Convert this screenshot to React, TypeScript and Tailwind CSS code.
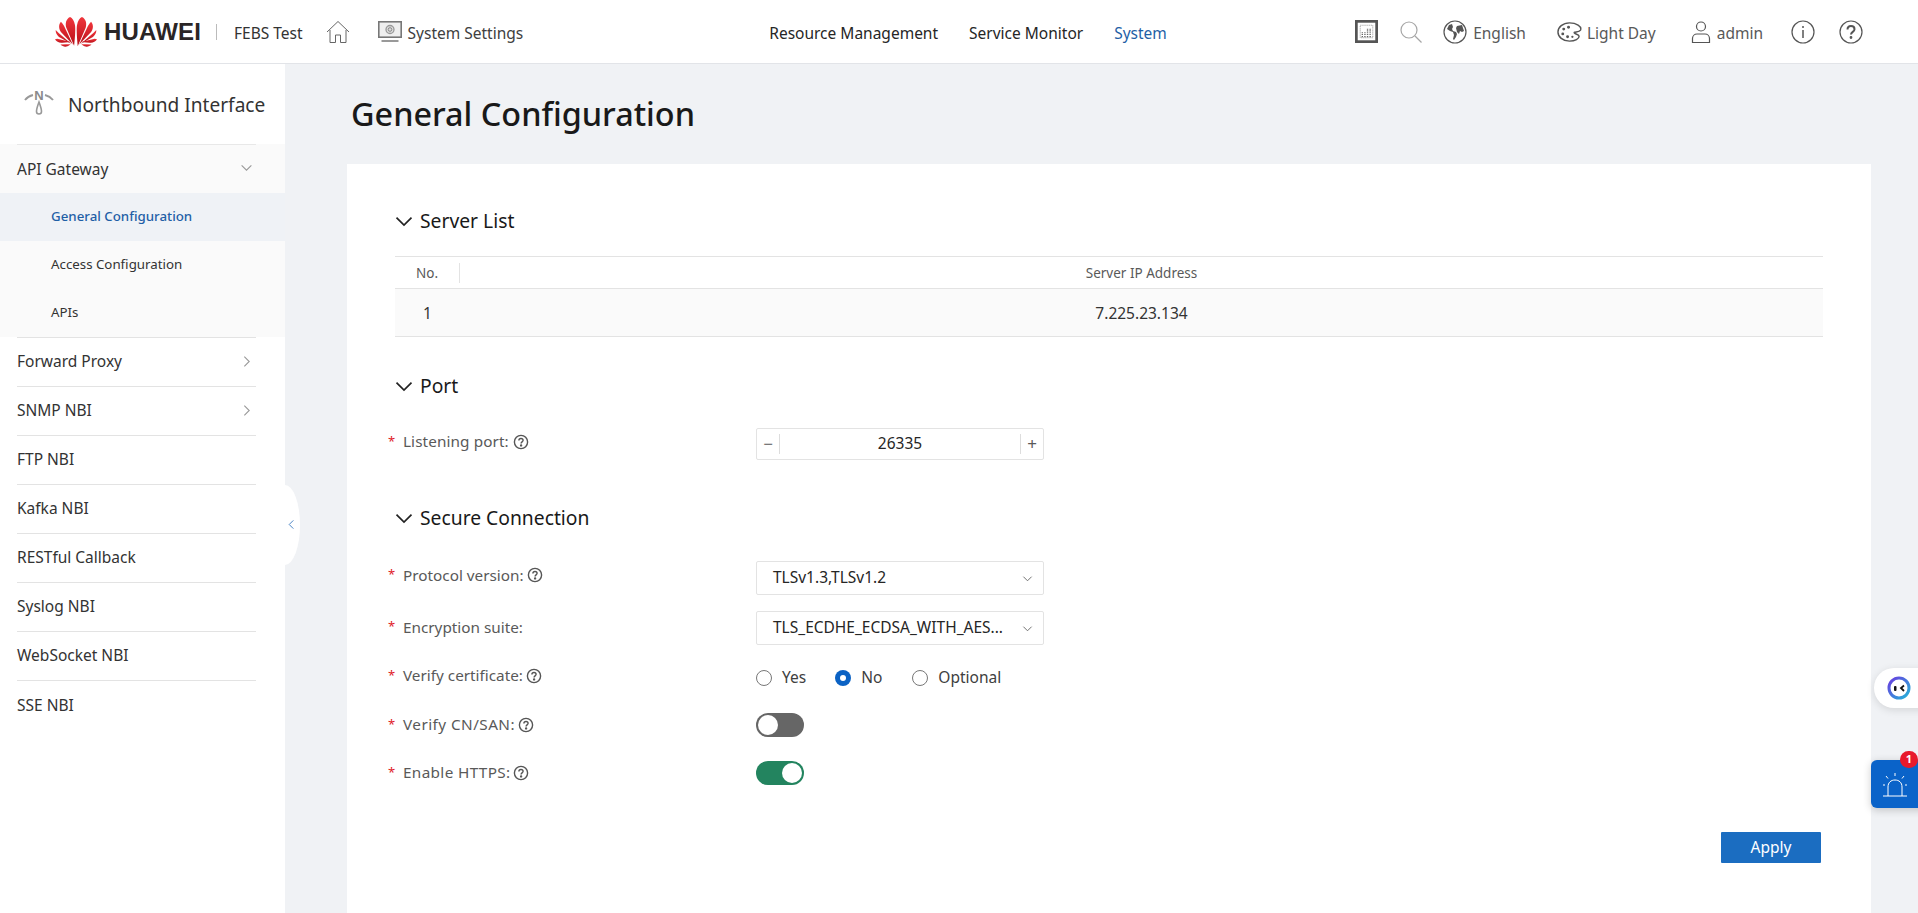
import React from "react";

const Chevron = ({ dir = "down", cls = "" }: { dir?: "down" | "right" | "left"; cls?: string }) => (
  <svg viewBox="0 0 12 12" className={cls} fill="none" stroke="currentColor" strokeWidth="1">
    {dir === "down" && <path d="M1.5 4l4.5 4.5L10.5 4" />}
    {dir === "right" && <path d="M4 1.5L8.5 6 4 10.5" />}
    {dir === "left" && <path d="M8 1.5L3.5 6 8 10.5" />}
  </svg>
);

const Help = ({ cls = "w-[16px] h-[16px]" }: { cls?: string }) => (
  <svg viewBox="0 0 16 16" className={`${cls} shrink-0`} fill="none" stroke="#555" strokeWidth="1.4">
    <circle cx="8" cy="8" r="6.6" />
    <path d="M5.9 6.4c0-1.2 1-1.9 2.1-1.9s2.1.7 2.1 1.8c0 1.5-2 1.6-2 3.1" />
    <circle cx="8.1" cy="11.4" r=".5" fill="#555" stroke="#555" />
  </svg>
);

const Logo = () => (
  <svg viewBox="0 0 46 33" className="w-[42px] h-[32px] shrink-0" preserveAspectRatio="none">
    <defs>
      <linearGradient id="pet" x1="0" y1="0" x2="0" y2="1">
        <stop offset="0" stopColor="#f0363c" />
        <stop offset="1" stopColor="#b80f18" />
      </linearGradient>
    </defs>
    <path d="M16.5 1C12 3 11 8 12.4 12l8.6 19C21 31 23 14 21.8 9 21 5 19 2 16.5 1z" fill="url(#pet)" />
    <path d="M29.5 1C34 3 35 8 33.6 12L25 31C25 31 23 14 24.2 9 25 5 27 2 29.5 1z" fill="url(#pet)" />
    <path d="M6.5 6C3.5 9 4 14 7 17l12.5 12.5L9.8 10C8.8 8.5 7.5 7 6.5 6z" fill="url(#pet)" />
    <path d="M39.5 6C42.5 9 42 14 39 17L26.5 29.5 36.2 10C37.2 8.5 38.5 7 39.5 6z" fill="url(#pet)" />
    <path d="M.8 14.5C.5 18 3 21 6 22.5l12 6.5L4 17.5C3 16.5 1.8 15.5.8 14.5z" fill="url(#pet)" />
    <path d="M45.2 14.5C45.5 18 43 21 40 22.5l-12 6.5 14-11.5c1-1 2.2-2 3.2-3z" fill="url(#pet)" />
    <path d="M0 24c1.5 2.5 5 4 8 3.5l9.5-.8L2.5 23.500C1.5 23.5.8 23.7 0 24z" fill="url(#pet)" />
    <path d="M46 24c-1.5 2.5-5 4-8 3.5l-9.5-.8 15-3.2c1 0 1.7.2 2.5.5z" fill="url(#pet)" />
    <path d="M6 29.5c3 2.5 6.5 3 10 .5.5-.4 1.500-1 1.500-1z" fill="url(#pet)" />
    <path d="M40 29.5c-3 2.5-6.5 3-10 .5-.5-.4-1.500-1-1.500-1z" fill="url(#pet)" />
  </svg>
);

const Row = ({ label, children, help = true, h = "h-[47px]", yl = "", lc = "" }: { label: string; children: React.ReactNode; help?: boolean; h?: string; yl?: string; lc?: string }) => (
  <div className={`flex items-center ${h}`}>
    <div className={`w-[369px] flex items-center text-[15.3px] text-[#595959] ${yl}`}>
      <span className="text-[#e02128] w-[16px] pl-[1px] text-[13px]">*</span>
      <span className={lc}>{label}</span>
      {help && <span className="ml-[3px]"><Help /></span>}
    </div>
    {children}
  </div>
);

const SectionHead = ({ title, cls = "" }: { title: string; cls?: string }) => (
  <div className={`flex items-center h-[32px] ${cls}`}>
    <Chevron cls="w-[20px] h-[20px] text-[#222] -ml-[1px]" />
    <span className="ml-[6px] text-[19.3px] text-[#191919]">{title}</span>
  </div>
);

const Select = ({ value }: { value: string }) => (
  <div className="w-[288px] h-[34px] border border-[#e3e3e3] rounded-[2px] flex items-center pl-[16px] pr-[10px] justify-between text-[15.5px] text-[#262626]">
    <span>{value}</span>
    <Chevron cls="w-[11px] h-[11px] text-[#666]" />
  </div>
);

const Radio = ({ label, on = false, cls = "" }: { label: string; on?: boolean; cls?: string }) => (
  <div className={`flex items-center text-[15.5px] text-[#404040] ${cls}`}>
    {on ? (
      <span className="w-[16px] h-[16px] rounded-full bg-[#0b62c4] flex items-center justify-center">
        <span className="w-[6px] h-[6px] rounded-full bg-white" />
      </span>
    ) : (
      <span className="w-[16px] h-[16px] rounded-full border border-[#777] bg-white" />
    )}
    <span className="ml-[10px]">{label}</span>
  </div>
);

const Toggle = ({ on }: { on: boolean }) => (
  <div className={`w-[48px] h-[24px] rounded-full flex items-center px-[2px] ${on ? "bg-[#23845f] justify-end" : "bg-[#666666] justify-start"}`}>
    <span className="w-[20px] h-[20px] rounded-full bg-white" />
  </div>
);

const NavItem = ({ label, arrow, last }: { label: string; arrow?: boolean; last?: boolean }) => (
  <div className={`ml-[17px] mr-[29px] h-[49px] flex items-center justify-between text-[15.5px] text-[#333] ${last ? "" : "border-b border-[#e3e3e3]"}`}>
    <span>{label}</span>
    {arrow && <Chevron dir="right" cls="w-[13px] h-[13px] text-[#999] mr-[3px] -mt-[2px]" />}
  </div>
);

export default function App() {
  return (
    <div className="relative w-[1918px] h-[913px] overflow-hidden bg-white flex flex-col" style={{ fontFamily: '"Noto Sans", sans-serif' }}>
      {/* Header */}
      <header className="h-[64px] shrink-0 bg-white border-b border-[#e2e4e8] flex items-center text-[15.5px] text-[#404040]">
        <div className="ml-[55px]"><Logo /></div>
        <span className="ml-[7px] text-[24px] font-bold text-[#2a2526] tracking-[0.2px] w-[97px] mt-[1px]" style={{ fontFamily: '"Liberation Sans", sans-serif' }}>HUAWEI</span>
        <span className="ml-[15px] w-px h-[16px] bg-[#bbb]" />
        <span className="ml-[17px] text-[#333] mt-[4px]">FEBS Test</span>
        <svg viewBox="0 0 24 24" className="ml-[23px] w-[24px] h-[24px] text-[#666]" fill="none" stroke="currentColor" strokeWidth="1">
          <path d="M1 12L12 1.5 23 12M4 10v12.500h5.500V15h5v7.500H20V10" />
        </svg>
        <svg viewBox="0 0 24 22" className="ml-[28px] w-[24px] h-[22px] text-[#777]" fill="none" stroke="currentColor">
          <rect x=".8" y=".8" width="22.4" height="15.400" fill="#efefef" strokeWidth="1.6" />
          <circle cx="12" cy="8.500" r="4" strokeWidth="1.300" stroke="#999" fill="#ddd" />
          <circle cx="12" cy="8.500" r="1.800" strokeWidth="1" stroke="#888" />
          <path d="M3.500 20h17" strokeWidth="2" stroke="#999" />
        </svg>
        <span className="ml-[6px] mt-[4px]">System Settings</span>

        <span className="ml-[246px] text-[#262626] mt-[4px]">Resource Management</span>
        <span className="ml-[31px] text-[#262626] mt-[4px]">Service Monitor</span>
        <span className="ml-[31px] text-[#1f5fa6] mt-[4px]">System</span>

        <div className="ml-[auto] mr-[55px] flex items-center text-[#595959]">
          <svg viewBox="0 0 22 22" className="w-[23px] h-[23px]" fill="none">
            <rect x="1.300" y="1.300" width="19.400" height="19.400" stroke="#555" strokeWidth="2.600" />
            <rect x="5" y="5" width="12" height="12" stroke="#aaa" strokeDasharray="1.200 .8" />
            <path d="M7 16.500v-5M9.500 16.500v-5M12 16.500V8M14.500 16.500V8" stroke="#666" strokeWidth="1.300" strokeDasharray="1.300 .8" />
          </svg>
          <svg viewBox="0 0 22 22" className="ml-[22px] w-[22px] h-[22px]" fill="none" stroke="#a6a6a6" strokeWidth="1.200">
            <circle cx="9" cy="9" r="8" />
            <path d="M15 15l6.500 6.500" />
          </svg>
          <svg viewBox="0 0 24 24" className="ml-[21px] w-[24px] h-[24px]" fill="none">
            <circle cx="12" cy="12" r="11" stroke="#555" strokeWidth="1.200" />
            <path d="M9 4L6 5 4 9l3 2 3 1 1 3-1 4 1 1 2-3 1-3-1-2-3-1-1-2 1-2zM14 6l5-1 2 6-2 1-2-1-1 3-2-2-1-4z" fill="#555" />
          </svg>
          <span className="ml-[6px] mt-[4px]">English</span>
          <svg viewBox="0 0 26 22" className="ml-[31px] w-[25px] h-[22px]" fill="none">
            <path d="M13 1.500C6 1.500 1 6 1 11s5 9.500 12 9.500c6 0 10-2.500 10-5 0-2-3.500-2-5-3.500-1-1.500 5-.5 6.500-3C26 5 20 1.500 13 1.500z" stroke="#555" strokeWidth="1.500" />
            <circle cx="7" cy="8" r="1.500" fill="#555" /><circle cx="12" cy="6" r="1.500" fill="#555" />
            <circle cx="6" cy="13" r="1.500" fill="#555" /><circle cx="11" cy="16" r="1.500" fill="#555" /><circle cx="16" cy="16" r="1.200" fill="#555" />
          </svg>
          <span className="ml-[5px] mt-[4px]">Light Day</span>
          <svg viewBox="0 0 20 24" className="ml-[35px] w-[20px] h-[24px]" fill="none" stroke="#555" strokeWidth="1.200">
            <circle cx="10" cy="6.500" r="4.500" />
            <path d="M1.500 22.500v-4c0-2.500 2-4.500 4.500-4.500h8c2.500 0 4.500 2 4.500 4.500v4z" />
          </svg>
          <span className="ml-[6px] mt-[4px]">admin</span>
          <svg viewBox="0 0 24 24" className="ml-[28px] w-[24px] h-[24px]" fill="none" stroke="#555" strokeWidth="1.200">
            <circle cx="12" cy="12" r="11" />
            <path d="M12 10v8M12 6v2" strokeWidth="1.500" />
          </svg>
          <svg viewBox="0 0 24 24" className="ml-[24px] w-[24px] h-[24px]" fill="none" stroke="#555" strokeWidth="1.200">
            <circle cx="12" cy="12" r="11" />
            <path d="M8.500 9.500C8.500 7.300 10 6 12 6s3.500 1.300 3.500 3.200c0 2.600-3.500 2.800-3.500 5.300" strokeWidth="2" />
            <circle cx="12" cy="17.500" r=".8" fill="#555" />
          </svg>
        </div>
      </header>

      <div className="flex flex-1 min-h-0">
        {/* Sidebar */}
        <aside className="relative w-[285px] shrink-0 bg-white">
          <div className="h-[80px] flex items-center pl-[24px]">
            <svg viewBox="0 0 30 30" className="w-[30px] h-[30px] -mt-[4px] shrink-0" fill="none" stroke="#999" strokeWidth="2">
              <path d="M1 13c2-2.500 4-4 8-5M29 13c-2-2.500-4-4-8-5" />
              <text x="15" y="13" textAnchor="middle" fontSize="13" fontWeight="700" fill="#8a8a8a" stroke="none" fontFamily="Liberation Sans, sans-serif">N</text>
              <path d="M15 15c-1.500 4-2.500 7-2.500 9.500 0 1.500 1 2.500 2.500 2.500s2.500-1 2.500-2.500c0-2.500-1-5.500-2.500-9.500z" strokeWidth="1.600" />
            </svg>
            <span className="ml-[14px] mt-[2px] text-[19.1px] text-[#333]">Northbound Interface</span>
          </div>
          <div className="bg-[#fafafa]">
            <div className="ml-[17px] mr-[29px] border-t border-[#e8e8e8] h-[49px] flex items-center justify-between text-[15.5px] text-[#333]">
              <span className="mt-[1px]">API Gateway</span>
              <Chevron cls="w-[13px] h-[13px] text-[#999] mr-[3px] -mt-[4px]" />
            </div>
            <div className="h-[48px] bg-[#eff2f6] pl-[51px] pb-[1px] flex items-center text-[13.3px] font-medium text-[#1f5fa6]">General Configuration</div>
            <div className="h-[48px] pl-[51px] pb-[1px] flex items-center text-[13.3px] text-[#333]">Access Configuration</div>
            <div className="h-[48px] pl-[51px] pb-[1px] flex items-center text-[13.3px] text-[#333]">APIs</div>
          </div>
          <div className="border-t border-[#e3e3e3] ml-[17px] mr-[29px]" />
          <NavItem label="Forward Proxy" arrow />
          <NavItem label="SNMP NBI" arrow />
          <NavItem label="FTP NBI" />
          <NavItem label="Kafka NBI" />
          <NavItem label="RESTful Callback" />
          <NavItem label="Syslog NBI" />
          <NavItem label="WebSocket NBI" />
          <NavItem label="SSE NBI" last />
          {/* collapse handle */}
          <div className="absolute left-[285px] top-[421px] w-[15px] h-[80px] bg-white rounded-r-[15px_40px] flex items-center justify-start pl-[1px] z-10">
            <Chevron dir="left" cls="w-[11px] h-[11px] text-[#3b7bbf] -mt-[2px]" />
          </div>
        </aside>

        {/* Main */}
        <main className="flex-1 min-w-0 bg-[#f0f2f5] pl-[62px] pr-[47px] flex flex-col">
          <h1 className="h-[100px] pt-[26px] pl-[4px] text-[32.4px] leading-[46px] font-medium text-[#191919]">General Configuration</h1>
          <section className="flex-1 bg-white pl-[48px] pr-[48px] pt-[41px]">
            <SectionHead title="Server List" />
            <div className="mt-[19px] border-t border-[#e3e3e3]">
              <div className="h-[32px] pt-[1px] flex items-center text-[13.5px] text-[#595959] border-b border-[#e3e3e3]">
                <span className="w-[65px] text-center border-r border-[#e3e3e3] leading-[20px]">No.</span>
                <span className="flex-1 text-center">Server IP Address</span>
              </div>
              <div className="h-[48px] pt-[2px] bg-[#fafafa] flex items-center text-[15.5px] text-[#333] border-b border-[#e3e3e3]">
                <span className="w-[65px] text-center">1</span>
                <span className="flex-1 text-center">7.225.23.134</span>
              </div>
            </div>

            <SectionHead title="Port" cls="mt-[33px]" />
            <div className="mt-[26px]">
              <div className="-ml-[8px] flex items-center h-[32px]">
                <div className="w-[369px] flex items-center text-[15.3px] text-[#595959] -mt-[5px]">
                  <span className="text-[#e02128] w-[16px] pl-[1px] text-[13px]">*</span>
                  <span className="tracking-[0.1px]">Listening port:</span>
                  <span className="ml-[4px]"><Help /></span>
                </div>
                <div className="w-[288px] h-[32px] border border-[#e3e3e3] rounded-[2px] flex items-center text-[#595959]">
                  <span className="w-[23px] h-[20px] border-r border-[#ddd] flex items-center justify-center text-[17px] leading-[20px]">−</span>
                  <span className="flex-1 text-center text-[15.5px] text-[#262626]">26335</span>
                  <span className="w-[23px] h-[20px] border-l border-[#ddd] flex items-center justify-center text-[17px] leading-[20px]">+</span>
                </div>
              </div>
            </div>

            <SectionHead title="Secure Connection" cls="mt-[42px]" />
            <div className="-ml-[8px] mt-[27px]">
              <Row label="Protocol version:" h="h-[34px]" yl="-mt-[6px]"><Select value="TLSv1.3,TLSv1.2" /></Row>
              <div className="mt-[16px]">
                <Row label="Encryption suite:" help={false} h="h-[34px]" yl="-mt-[2px]"><Select value="TLS_ECDHE_ECDSA_WITH_AES..." /></Row>
              </div>
              <div className="mt-[10px]">
                <Row label="Verify certificate:" h="h-[46px]" yl="-mt-[5px]">
                  <div className="flex items-center">
                    <Radio label="Yes" />
                    <Radio label="No" on cls="ml-[29px]" />
                    <Radio label="Optional" cls="ml-[30px]" />
                  </div>
                </Row>
              </div>
              <Row label="Verify CN/SAN:" h="h-[47px]" lc="tracking-[0.45px]"><Toggle on={false} /></Row>
              <Row label="Enable HTTPS:" h="h-[49px]" lc="tracking-[0.35px]"><Toggle on /></Row>
            </div>
            <div className="flex justify-end mt-[35px] pr-[2px]">
              <div className="w-[100px] h-[31px] bg-[#1b6dc1] text-white text-[15.5px] flex items-center justify-center rounded-[1px]">Apply</div>
            </div>
          </section>
        </main>
      </div>

      {/* Floating widgets */}
      <div className="absolute left-[1874px] top-[668px] w-[60px] h-[40px] rounded-l-full bg-white shadow-[0_2px_8px_rgba(0,0,0,0.12)] flex items-center pl-[13px]">
        <svg viewBox="0 0 24 24" className="w-[24px] h-[24px]" fill="none">
          <defs>
            <linearGradient id="bot" x1="0" y1="0" x2="1" y2="1">
              <stop offset="0" stopColor="#6a3be0" /><stop offset="1" stopColor="#23b5d8" />
            </linearGradient>
          </defs>
          <circle cx="12" cy="12" r="10" stroke="url(#bot)" strokeWidth="3" />
          <rect x="7" y="10" width="2.5" height="5" rx="1" fill="#111" />
          <path d="M17 9.500l-3 2.500 3 3" stroke="#111" strokeWidth="1.800" />
        </svg>
      </div>
      <div className="absolute left-[1871px] top-[760px] w-[60px] h-[48px] rounded-l-[6px] bg-[#0a63c9] shadow-[0_2px_8px_rgba(0,0,0,0.2)] pl-[12px] pt-[13px]">
        <svg viewBox="0 0 24 24" className="w-[24px] h-[24px]" fill="none" stroke="white" strokeWidth="1">
          <path d="M0 23h24M5 23v-9c0-4.500 3-7 7-7s7 2.500 7 7v9" />
          <path d="M12 0v3M3 3l2 2.500M21 3l-2 2.500M-1 12h3M22 12h3" />
        </svg>
      </div>
      <div className="absolute left-[1900px] top-[751px] w-[18px] h-[17px] rounded-full bg-[#e8192c] text-white text-[11px] font-bold flex items-center justify-center">1</div>
    </div>
  );
}
